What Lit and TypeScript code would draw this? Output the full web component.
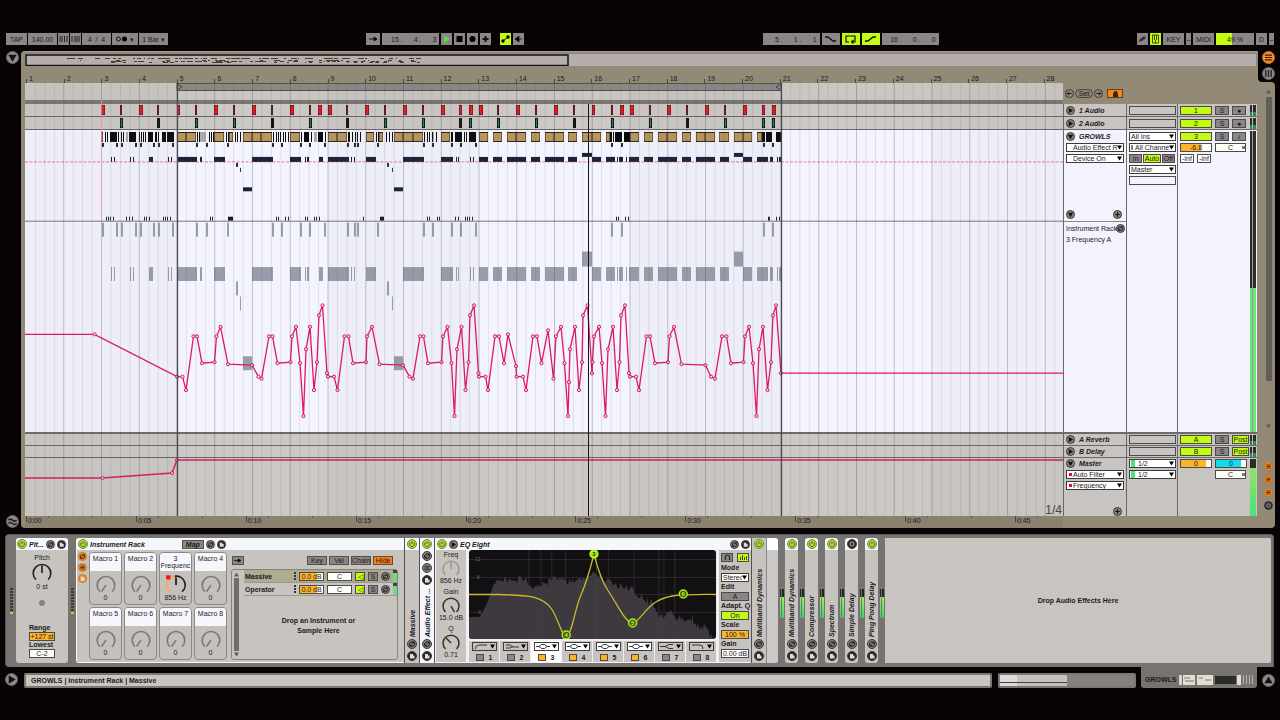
import { LitElement, html, svg, css, nothing } from "lit";
import { customElement } from "lit/decorators.js";

type Span = [number, number];

/* ---- arrangement data, in canvas units (one bar = 37.75) ---- */
const BAR = 37.75;
const redClips: Span[] = [
  [101, 4], [120, 2], [139, 4], [157, 2], [177, 3], [195, 2], [214, 4], [233, 2], [252, 4], [271, 2], [290, 4], [309, 2],
  [318, 4], [328, 4], [346, 2], [365, 4], [384, 2], [403, 4], [422, 2], [441, 4], [459, 3], [469, 4], [479, 4], [497, 2],
  [516, 4], [535, 2], [554, 4], [573, 2], [592, 3], [611, 2], [620, 4], [630, 4], [649, 2], [667, 4], [686, 2], [705, 4],
  [724, 2], [743, 4], [762, 3], [772, 4],
];
const greenClips: [number, boolean][] = [
  [120, true], [157, false], [195, true], [233, true], [271, false], [309, true], [346, false], [384, true], [422, true],
  [459, false], [469, true], [497, true], [535, true], [573, false], [611, true], [649, true], [686, false], [724, true],
  [762, true], [772, true],
];
const tanClips: Span[] = [
  [101, 2], [177, 9], [186, 10], [214, 10], [229, 4], [243, 9], [252, 9], [261, 11], [290, 10], [328, 9], [337, 10],
  [366, 8], [379, 4], [394, 9], [403, 10], [413, 10], [441, 9], [479, 9], [493, 9], [507, 9], [516, 10], [531, 9],
  [545, 9], [554, 10], [568, 9], [582, 10], [592, 9], [606, 4], [630, 9], [644, 9], [658, 9], [667, 10], [682, 9],
  [696, 9], [705, 10], [719, 10], [734, 9], [743, 9], [757, 5],
];
const blackClips: Span[] = [
  [105, 1], [107, 1], [110, 7], [118, 1], [121, 1], [123, 1], [129, 7], [139, 1], [141, 1], [143, 1], [145, 1], [148, 5], [155, 2],
  [158, 1], [162, 4], [167, 7], [197, 1], [199, 1], [209, 1], [211, 1], [213, 1], [226, 1], [228, 1], [235, 1], [237, 1],
  [240, 1], [273, 1], [276, 1], [278, 1], [280, 1], [283, 1], [285, 1], [288, 1], [301, 1], [304, 5], [311, 1], [318, 5],
  [325, 1], [348, 2], [352, 1], [355, 1], [357, 1], [360, 1], [376, 1], [378, 1], [386, 1], [389, 1], [392, 1], [424, 1], [427, 1],
  [429, 1], [432, 1], [436, 1], [451, 2], [455, 7], [464, 1], [466, 1], [469, 7], [610, 2], [613, 1], [615, 7], [624, 6],
  [762, 3], [766, 6], [776, 5],
];
const grayClips: Span[] = [[126, 2], [200, 6], [314, 3], [432, 2]];
const topTicks = [
  102, 116, 121, 135, 140, 153, 158, 172, 196, 206, 227, 272, 281, 300, 309, 324, 347, 354, 357, 377, 423, 432, 451, 460,
  475, 611, 621, 763, 772,
];
const notes: Span[] = [
  [111, 1], [114, 1], [130, 1], [133, 1], [149, 4], [168, 1], [171, 1], [177, 20], [200, 2], [214, 11], [252, 21],
  [290, 11], [305, 1], [307, 2], [319, 4], [328, 21], [351, 1], [354, 1], [366, 10], [403, 21], [441, 12], [456, 1],
  [458, 1], [470, 1], [473, 1], [479, 9], [493, 9], [507, 19], [531, 9], [545, 19], [568, 9], [592, 9], [606, 9],
  [617, 1], [619, 4], [626, 1], [629, 10], [644, 9], [658, 19], [682, 9], [696, 19], [720, 9], [743, 9], [757, 11],
  [770, 3], [777, 1], [779, 2],
];
const lowTicks = [
  106, 108, 110, 113, 126, 129, 132, 144, 146, 149, 163, 165, 167, 170, 210, 212, 276, 278, 285, 288, 305, 307, 314, 316,
  319, 363, 427, 429, 437, 439, 455, 458, 465, 467, 469, 472, 616, 618, 625, 628, 768, 769, 776, 779,
];
const growlPoints: Span[] = [
  [94.5, 334], [177, 376.5], [182.5, 376.5], [186, 390], [193.5, 336], [197, 336], [202, 363], [214.5, 362], [216.5, 336],
  [220.5, 326.5], [228, 364], [252, 365], [258.5, 376.5], [261.5, 378.5], [269, 336], [272.5, 336], [277.5, 363],
  [290.5, 362], [292, 336], [296, 326.5], [300, 363], [303.5, 416], [306, 349], [310, 326.5], [314, 390], [317, 362],
  [319, 315], [322.5, 305], [327, 373], [328, 376.5], [334, 376.5], [337.5, 390], [344.5, 336], [348.5, 336], [353, 363],
  [366, 362], [367, 336], [372, 326.5], [379.5, 364], [403, 365], [409.5, 376.5], [413, 378.5], [420, 336], [423.5, 336],
  [428, 363], [441.5, 362], [443, 336], [447.5, 326.5], [451.5, 363], [454.5, 416], [457, 349], [461.5, 326.5],
  [465.5, 390], [468.5, 362], [470, 315], [474, 305], [478.5, 373], [479, 376.5], [485.5, 376.5], [488, 390], [495, 336],
  [499, 336], [504, 363], [508, 334], [516, 366], [516.5, 376.5], [523, 376.5], [526, 390], [533, 336], [537, 336],
  [541.5, 363], [548, 330], [553.5, 378.5], [556, 336], [561, 326.5], [564.5, 363], [568, 416], [569, 382], [570, 349],
  [575, 326.5], [579, 390], [582, 362], [583, 315], [587.5, 305], [592, 373], [592.5, 362], [594, 336], [599, 326.5],
  [602, 363], [605.5, 416], [608, 349], [613, 326.5], [617, 390], [619.5, 362], [621, 315], [625, 305], [629, 373],
  [630, 376.5], [636, 376.5], [639, 390], [646.5, 336], [650, 336], [655, 363], [668, 362], [669.5, 336], [674, 326.5],
  [681.5, 364], [705.5, 365], [711, 376.5], [715, 378.5], [722, 336], [726.5, 336], [731, 363], [743.5, 362], [745, 336],
  [749, 326.5], [753, 363], [756.5, 416], [759, 349], [763, 326.5], [767.5, 390], [771, 362], [773, 315], [776, 305],
  [781, 373],
];
const hash = (n: number) => {
  const v = Math.sin(n * 127.1) * 43758.5453;
  return v - Math.floor(v);
};

/* ---- small glyphs ---- */
const rects = (list: Span[], y: number, h: number, fill: string) =>
  list.map(([x, w]) => svg`<rect x=${x} y=${y} width=${w} height=${h} fill=${fill}/>`);

const glyphs: Record<string, unknown> = {
  down: svg`<path d="M2.500 3.500h6L5.500 8.500z" fill="#111"/>`,
  right: svg`<path d="M3.500 2.500v6L8.500 5.500z" fill="#111"/>`,
  up: svg`<path d="M2.500 7.500h6L5.500 2.500z" fill="#111"/>`,
  plus: svg`<path d="M5.500 3v5M3 5.500h5" stroke="#111" stroke-width="1.200"/>`,
  left: svg`<path d="M8 5.500H3M5 3.500L3 5.500l2 2" fill="none" stroke="#111"/>`,
  fwd: svg`<path d="M3 5.500h5M6 3.500l2 2-2 2" fill="none" stroke="#111"/>`,
  swap: svg`<path d="M3 6.500a2.500 2.500 0 0 1 4-2.500M8 4.500a2.500 2.500 0 0 1-4 2.800M7.500 2.500v2h-2M3.500 8.500v-2h2" fill="none" stroke="#1a1a1a" stroke-width="1"/>`,
  save: svg`<path d="M3.500 3.500h3v1.500h1.500v3h-4.500z" fill="#ddd"/>`,
  power: svg`<path d="M5.500 2.500v3M3.800 3.800a2.500 2.500 0 1 0 3.400 0" fill="none" stroke="#4c6a10" stroke-width=".9"/>`,
  off: svg`<circle cx="5.500" cy="5.500" r="2" fill="none" stroke="#bbb" stroke-width=".9"/>`,
  list: svg`<path d="M3 3.800h5M3 5.500h5M3 7.200h5" stroke="#222" stroke-width=".9"/>`,
  bars: svg`<path d="M3.500 3v5M5.500 3v5M7.500 3v5" stroke="#222"/>`,
  wave: svg`<path d="M2.500 4.500q1.500-1.500 3 0t3 0M2.500 7q1.500-1.500 3 0t3 0" fill="none" stroke="#222" stroke-width="1.100"/>`,
};
const round = (glyph: string, label: string, cls = "") => html`
  <button class="round ${cls}" aria-label=${label}><svg viewBox="1.500 1.500 8 8">${glyphs[glyph]}</svg></button>`;

const drop = (label: string, value: string, cls = "") => html`
  <span class="drop ${cls}">
    <select aria-label=${label}><option>${value}</option></select>
    <svg class="caret" viewBox="0 0 6 5"><path d="M0 0h6L3 5z"/></svg>
  </span>`;

const knob = (angle: number, color = "#7c7975") => html`
  <svg class="knob" viewBox="0 0 20 18">
    <path d="M4.500 16A8 8 0 1 1 15.500 16" fill="none" stroke=${color} stroke-width="1.500"/>
    <path d="M10 10v-7" stroke=${color} stroke-width="1.500" transform="rotate(${angle} 10 10)"/>
  </svg>`;

@customElement("app-root")
export class AppRoot extends LitElement {
  static styles = css`
    :host {
      display: flex; flex-direction: column; min-height: 100vh; box-sizing: border-box;
      padding: 33px 0 32px; background: #080406; color: #1c1a1a;
      font: 7px/9px "Liberation Sans", Arial, sans-serif; overflow: hidden;
    }
    *, *::before, *::after { box-sizing: border-box; }
    svg { display: block; }
    button, select, input { font: inherit; color: inherit; margin: 0; padding: 0; border: 0; border-radius: 0; }
    .row { display: flex; align-items: center; }

    /* control bar */
    .bar { display: flex; height: 12px; padding: 0 6px; margin-bottom: 6px; }
    .group { display: flex; gap: 2px; }
    .group.tight { gap: 1px; }
    .s5 { flex: 5; } .s6 { flex: 6; }
    .cb { height: 12px; background: #8c8585; display: flex; align-items: center; justify-content: center; text-align: center; white-space: nowrap; overflow: hidden; }
    .cb.lime, .lime { background: #c3fb12; }
    .w5 { width: 5px; } .w11 { width: 11px; } .w14 { width: 14px; } .w18 { width: 18px; } .w21 { width: 21px; }
    .w26 { width: 26px; } .w29 { width: 29px; } .w57 { width: 57px; }
    .cb svg { width: 11px; height: 10px; }
    .cpu { width: 38px; background: linear-gradient(90deg, #c3fb12 42%, #8c8585 42%); }
    .digits { gap: 11px; justify-content: flex-end; padding-right: 3px; }

    .round { width: 9px; height: 9px; flex: none; border-radius: 50%; background: #85817d; border: 1px solid #3c3a39; display: flex; }
    .round svg { width: 100%; height: 100%; }
    .round.big { width: 13px; height: 13px; background: #8d8987; border-color: #6c6867; }
    .round.on { width: 10px; height: 10px; background: #b4d94a; border-color: #6f8a2a; }
    .round.dark { background: #2c2a2b; }
    .round.orange { background: #fb8c1c; border-color: #c87524; }
    .round.clear { background: transparent; }

    /* arrangement */
    .arrange { display: flex; flex: 1; }
    .gutter { width: 21px; display: flex; flex-direction: column; justify-content: space-between; align-items: center; padding: 0 0 0 3px; }
    .main { flex: 1; min-width: 0; display: flex; flex-direction: column; background: #928976; border-radius: 4px 0 0 4px; border-top: 1px solid #a69f8f; padding: 2px 1px 0 4px; }
    .overview { height: 12px; margin-right: 1px; background: #b5aead; }
    .overview svg, .lane svg, .grid { width: 100%; height: 100%; }
    .ruler { display: flex; height: 17px; margin-right: 194px; padding: 8px 0 0 1px; }
    .ruler span { flex: 100 1 0; min-width: 0; padding-left: 3px; white-space: nowrap; background: linear-gradient(#4b463e, #4b463e) 0 5px / 1px 4px no-repeat; }
    .ruler span:last-child { flex-grow: 47; }
    .times { display: flex; height: 12px; margin-right: 194px; padding-left: 1px; background: #8a816f; }
    .times span { flex: 110 1 0; min-width: 0; padding-left: 2px; background: linear-gradient(#4b463e, #4b463e) 0 0 / 1px 6px no-repeat, linear-gradient(#5f594f, #5f594f) 22px 0 / 1px 2px no-repeat, linear-gradient(#5f594f, #5f594f) 66px 0 / 1px 2px no-repeat; }
    .times span:last-child { flex-grow: 47; overflow: visible; }
    .work { flex: 1; display: grid; grid-template-columns: minmax(0, 1fr) 194px; }
    .lanes { position: relative; display: flex; flex-direction: column; }
    .grid { position: absolute; inset: 0; pointer-events: none; }
    .scrub { height: 17px; background: #cac7c2; }
    .scrub svg { width: 100%; height: 100%; }
    .sep { height: 4px; background: #7a7672; }
    .lane { height: 13px; background: #cbc8c5; border-bottom: 1px solid #6b6766; }
    .lane.tall { flex: 1 1 0; background: #f4f4fe; border-bottom: 2px solid #6e6a67; position: relative; }
    .lane.tall svg { position: absolute; inset: 0; }
    .lane.send { height: 12px; }
    .lane.master { height: 58px; border: 0; position: relative; }
    .zoomlabel { position: absolute; right: 1px; bottom: 0; font-size: 12px; line-height: 12px; color: #444; }

    .heads { display: flex; flex-direction: column; }
    .setrow { height: 21px; padding-left: 2px; gap: 1px; }
    .set { width: 18px; height: 9px; border: 1px solid #4b463e; border-radius: 5px; background: #8b8373; line-height: 7px; }
    .lock { width: 16px; height: 9px; background: #fd8410; border: 1px solid #59402a; margin-left: 3px; display: grid; place-items: center; }
    .lock svg { width: 5px; height: 6px; }
    .head { display: grid; grid-template-columns: 63px 51px 80px; height: 13px; background: #c8c4c1; border-bottom: 1px solid #6b6766; }
    .head.tall { flex: 1 1 0; background: #f3f3fe; border-bottom: 2px solid #6e6a67; }
    .head.send { height: 12px; }
    .head.master { height: 58px; border: 0; }
    .col { border-left: 1px solid #6b6766; padding: 2px 2px 0; position: relative; display: flex; flex-direction: column; gap: 2px; min-width: 0; }
    .send .col, .master .col { padding-top: 1px; }
    .name { display: flex; align-items: center; gap: 4px; height: 9px; }
    .name span { font-weight: bold; font-style: italic; }
    .mix { display: flex; gap: 3px; height: 9px; }
    .box { height: 9px; border: 1px solid #4c4a4a; display: block; width: 47px; background: transparent; flex: none; }
    .num { width: 32px; height: 9px; border: 1px solid #4c4a4a; line-height: 7px; text-align: center; flex: none; }
    .sq { width: 14px; height: 9px; border: 1px solid #4c4a4a; background: #8c8585; line-height: 7px; text-align: center; flex: none; }
    .sq.lime { background: #c3fb12; }
    .pan { width: 31px; height: 9px; border: 1px solid #4c4a4a; background: linear-gradient(90deg, #777, #777) 26px 2px / 3px 3px no-repeat #fdfdf8; line-height: 7px; text-align: center; }
    .blank { width: 32px; height: 9px; }
    .inf { width: 14px; height: 9px; border: 1px solid #4c4a4a; background: #fff; line-height: 7px; text-align: center; }
    .post { width: 17px; }
    .vol { background: linear-gradient(90deg, #fdb42c 68%, #fdfdf8 68%); }
    .vol.full { background: linear-gradient(90deg, #fdb42c 84%, #fdfdf8 84%); }
    .cyan { background: linear-gradient(90deg, #12dbee 84%, #fdfdf8 84%); }
    .meter { position: absolute; right: 1px; top: 1px; bottom: 0; width: 6px; background: linear-gradient(90deg, transparent 2px, #bbb 2px 3px, transparent 3px), linear-gradient(#2c2c2c 60%, #2c8a52 60%); }
    .meter.hot { background: linear-gradient(90deg, transparent 2px, #9a9a9a 2px 3px, transparent 3px), linear-gradient(#2c2c2c 52%, #69e47a 52%); }
    .meter.mast { background: linear-gradient(#2c2c2c 15%, #8ce65e 16%, #4fe37c 90%); }
    .drop { position: relative; display: block; height: 9px; width: 58px; border: 1px solid #3c3a3a; background: #fff; flex: none; }
    .drop select { display: block; appearance: none; background: transparent; width: 100%; height: 7px; line-height: 7px; padding: 0 6px; overflow: hidden; }
    .drop .caret { position: absolute; right: 1px; top: 1px; width: 5px; height: 5px; pointer-events: none; }
    .drop.io { width: 47px; } .drop.io select { padding-left: 1px; }
    .drop.chan select { padding-left: 5px; }
    .drop.chan::before { content: ""; position: absolute; left: 1px; top: 1px; width: 2px; height: 5px; background: #8a8585; }
    .drop.sig::before { content: ""; position: absolute; left: 1px; top: 0; width: 4px; height: 7px; background: #53e17a; }
    .drop.sig select { padding-left: 8px; }
    .drop.red::before { content: ""; position: absolute; left: 2px; top: 2px; width: 3px; height: 3px; background: #d11148; }
    .three { display: flex; gap: 1px; } .three button { height: 9px; border: 1px solid #4c4a4a; background: #8c8585; line-height: 7px; width: 14px; } .three button:nth-child(2) { width: 18px; background: #c3fb12; }
    .spring { flex: 1; }
    .upper { height: 90px; display: flex; flex-direction: column; gap: 2px; }
    .between { display: flex; justify-content: space-between; align-items: center; padding: 0 2px 0 0; }
    .rule { height: 1px; background: #8a8787; margin: 0 -2px; }
    .chainname { display: flex; white-space: nowrap; height: 9px; }
    .chainname .round { margin-left: -1px; }

    .side { width: 22px; display: flex; flex-direction: column; padding-right: 5px; }
    .notch { height: 31px; display: flex; flex-direction: column; align-items: center; gap: 3px; padding-left: 4px; background: #080406; border-radius: 0 0 0 4px; }
    .wrap { background: #928976; margin-left: -1px; padding-left: 1px; }
    .scroll { flex: 1; background: #928976; border-radius: 0 4px 4px 0; display: flex; flex-direction: column; align-items: center; gap: 3px; padding: 7px 0 18px 4px; }
    .tri { width: 5px; height: 5px; fill: #605b52; }
    .thumb { flex: 1; width: 6px; background: #605d5a; margin-bottom: 40px; border-radius: 1px; }
    .dots { display: flex; flex-direction: column; gap: 4px; margin-top: 30px; }

    /* device view */
    .devices { display: flex; height: 133px; margin: 6px 6px 0 5px; background: #777370; border: solid #5a5756; border-width: 1px 1px 0; border-radius: 4px 4px 0 4px; padding: 3px 2px 4px 0; }
    .dev { display: flex; flex-direction: column; background: #c7c4c0; border-radius: 3px; overflow: hidden; flex: none; }
    .title { height: 12px; background: #f6f6fd; display: flex; align-items: center; gap: 2px; padding: 0 1px; font-weight: bold; font-style: italic; white-space: nowrap; flex: none; }
    .title .fix { width: 33px; }
    .gap { width: 8px; flex: none; display: flex; justify-content: center; align-items: center; }
    .gap.wide { width: 10px; }
    .gap i { width: 3px; height: 26px; background: repeating-linear-gradient(#3d3b38 0 2px, #777370 2px 3px); border-bottom: 2px solid #d0c83a; }
    .gap.hot { width: 7px; } .gap.hot i { width: 4px; height: 29px; border: 0; background: linear-gradient(90deg, transparent 1px, #777370 1px 2px, transparent 2px), linear-gradient(#222 8px, #9bf06a 8px, #3fd06a); margin-top: 5px; }
    .pitch { width: 52px; }
    .pbody { display: flex; flex-direction: column; align-items: center; padding-top: 3px; flex: 1; }
    .knob { width: 22px; height: 20px; flex: none; }
    .led { width: 6px; height: 6px; border-radius: 50%; background: #85817d; margin: 9px 0 18px; }
    .field { width: 26px; height: 9px; border: 1px solid #4c4a4a; text-align: center; background: #fff; line-height: 7px; display: block; white-space: nowrap; flex: none; }
    .field.amber { background: #fdb42c; }
    .lab { width: 26px; font-weight: bold; height: 8px; line-height: 8px; }

    .rack { display: flex; background: #c7c4c0; border-radius: 3px; overflow: hidden; flex: none; }
    .rackmain { width: 328px; display: flex; flex-direction: column; border-bottom: 1px solid #f6f6fd; border-left: 1px solid #f6f6fd; }
    .map { width: 22px; height: 9px; border: 1px solid #55504e; background: #8c8585; line-height: 7px; }
    .rbody { display: flex; flex: 1; padding: 2px 6px 3px 0; }
    .tools { width: 12px; display: flex; flex-direction: column; gap: 2px; padding: 0 1px; }
    .macros { display: grid; grid-template-columns: repeat(4, 33px); grid-template-rows: 53px 53px; gap: 2px; }
    .macro { border: 1px solid #8b8886; border-radius: 4px; overflow: hidden; text-align: center; line-height: 7px; display: flex; flex-direction: column; align-items: center; background: #c4c1bd; }
    .macro span { background: #f6f6fd; display: block; width: 100%; height: 18px; padding-top: 2px; white-space: nowrap; flex: none; }
    .macro .knob { margin: 3px 0 0; }
    .chains { flex: 1; margin-left: 4px; display: flex; flex-direction: column; }
    .ctop { display: flex; gap: 2px; height: 9px; margin: 4px 5px 4px 1px; }
    .tb { width: 20px; height: 9px; border: 1px solid #55504e; background: #8c8585; line-height: 7px; }
    .tb.hide { background: #fd7c10; } .tb.small { width: 12px; display: grid; place-items: center; }
    .list { flex: 1; border: 1px solid #85817d; border-radius: 3px; display: flex; }
    .lscroll { width: 12px; display: flex; flex-direction: column; align-items: center; gap: 1px; padding: 2px 3px 2px 0; }
    .lscroll i { flex: 1; width: 5px; background: #716d6a; }
    .crows { flex: 1; display: flex; flex-direction: column; }
    .crow { display: flex; align-items: center; gap: 3px; height: 13px; border-bottom: 1px solid #9a9794; padding-left: 1px; }
    .crow.sel { background: #adab90; }
    .crow b { flex: 1; }
    .crow .field { width: 25px; }
    .crow .amber { background: linear-gradient(90deg, #fdb42c 75%, #fff 75%); }
    .crow .sq { width: 10px; }
    .pip { width: 2px; height: 9px; background: repeating-linear-gradient(#333 0 2px, transparent 2px 3px); }
    .lvl { width: 4px; height: 12px; background: linear-gradient(#444 3px, #6ddc84 3px); }
    .dropzone { flex: 1; display: grid; place-content: center; text-align: center; font-weight: bold; line-height: 10px; padding: 0 4px 4px 0; }

    .strip { width: 13px; flex: none; display: flex; flex-direction: column; align-items: center; gap: 2px; background: #c7c4c0; padding: 1px 0 2px; border-radius: 3px; }
    .strip.cap { background: linear-gradient(#f6f6fd 12px, #c7c4c0 12px); }
    .strip.in { border-radius: 0; border-left: 1px solid #55504e; width: 15px; }
    .strip.white { background: #f6f6fd; }
    .strip .vt { flex: 1; writing-mode: vertical-rl; transform: rotate(180deg); font-weight: bold; font-style: italic; text-align: left; white-space: nowrap; line-height: 9px; }
    .strip .round { height: 10px; width: 10px; }
    .end { width: 12px; background: linear-gradient(#fff 12px, #cbc9c8 12px); border-left: 1px solid #8b8886; }

    .eq { width: 317px; display: flex; flex-direction: column; border-left: 1px solid #55504e; background: #f0f0f4; padding-left: 1px; }
    .ebody { display: flex; flex: 1; gap: 3px; background: #f0f0f4; padding-bottom: 1px; }
    .eknobs { width: 30px; background: #c7c4c0; display: flex; flex-direction: column; align-items: center; line-height: 8px; padding-top: 1px; }
    .eknobs .knob { height: 18px; }
    .eknobs span:nth-child(3n) { margin-bottom: 3px; }
    .emid { flex: 1; display: flex; flex-direction: column; gap: 2px; min-width: 0; }
    .screen { width: 100%; height: 89px; border-radius: 3px; background: #121013; }
    .bands { display: grid; grid-template-columns: repeat(8, 1fr); gap: 1px; flex: 1; }
    .band { background: #c7c4c0; display: flex; flex-direction: column; align-items: center; gap: 2px; padding-top: 1px; }
    .band.cur { background: #fff; }
    .band .drop { width: 25px; background: transparent; } .band.act .drop { background: #fff; }
    .band .shape { position: absolute; left: 1px; top: 0; width: 14px; height: 7px; }
    .band label { display: flex; align-items: center; gap: 5px; font-weight: bold; }
    .band input { appearance: none; width: 8px; height: 7px; border: 1px solid #4c4a4a; background: #8c8585; }
    .band input:checked { background: #fdb41c; }
    .eright { width: 32px; background: #c7c4c0; padding: 3px 2px 0; display: flex; flex-direction: column; line-height: 8px; font-weight: bold; }
    .eright .row { justify-content: space-between; margin-bottom: 2px; }
    .eright .sq { width: 12px; display: grid; place-items: center; }
    .eright .drop, .eright .field { width: 28px; font-weight: normal; margin: 1px 0; }
    .eright .gray { background: #8c8585; } .eright .field.lime { background: #c3fb12; }
    .eright span.l { height: 8px; white-space: nowrap; }
    .empty { flex: 1; display: grid; place-items: center; background: #c8c5c1; font-weight: bold; border-radius: 0 2px 2px 0; }

    /* status */
    .status { display: flex; height: 21px; padding: 0 5px; }
    .tabicon { width: 19px; padding: 6px 0 0 0; flex: none; }
    .msg { flex: 1; margin: 6px 6px 0 0; height: 15px; background: #c9c6c2; border: 2px solid #7b7775; border-radius: 2px; font-weight: bold; padding: 1px 5px; }
    .mini { width: 138px; margin: 6px 5px 0 0; height: 15px; background: linear-gradient(#444, #444) 0 7px / 67px 1px no-repeat, linear-gradient(90deg, #dedbda 17px, #c5c2bf 17px 67px, #85817f 67px); border: 2px solid #7b7775; border-radius: 2px; }
    .tab { width: 116px; background: #777370; border-radius: 0 0 3px 3px; display: flex; align-items: center; gap: 2px; padding: 4px 3px 0 4px; font-weight: bold; }
    .tab svg { width: 76px; height: 10px; flex: none; }
    .last { padding: 7px 0 0 5px; }
  `;

  private bar() {
    const digits = (a: string, b: string, c: string) => html`<span class="cb w57 digits"><span>${a}</span><span>${b}</span><span>${c}</span></span>`;
    return html`<header class="bar">
      <div class="group tight">
        <button class="cb w21">TAP</button><span class="cb w29">140.00</span>
        <button class="cb w11" aria-label="Nudge down"><svg viewBox="0 0 11 10"><path d="M2 2v6M4 2v6M6.500 2v6M9 2v6" stroke="#222"/></svg></button>
        <button class="cb w11" aria-label="Nudge up"><svg viewBox="0 0 11 10"><path d="M2 2v6M5 2v6M7 2v6M9 2v6" stroke="#222"/></svg></button>
        <span class="cb w29">4&nbsp; / &nbsp;4</span>
        <button class="cb w26" aria-label="Metronome"><svg viewBox="0 0 11 10"><circle cx="2.500" cy="5" r="2" fill="none" stroke="#111"/><circle cx="8.500" cy="5" r="2.500"/></svg>&nbsp; ▾</button>
        <button class="cb w29">1 Bar ▾</button>
      </div>
      <i class="s5"></i>
      <div class="group">
        <button class="cb w14" aria-label="Follow"><svg viewBox="0 0 11 10"><path d="M1 5h7M6 3l3 2-3 2z" stroke="#111"/></svg></button>
        ${digits("15 .", "4 .", "3")}
        <button class="cb w11" aria-label="Play"><svg viewBox="0 0 11 10"><path d="M3 1.500v7L9 5z" fill="#4ee63c"/></svg></button>
        <button class="cb w11" aria-label="Stop"><svg viewBox="0 0 11 10"><path d="M2.500 2h6v6h-6z"/></svg></button>
        <button class="cb w11" aria-label="Record"><svg viewBox="0 0 11 10"><circle cx="5.500" cy="5" r="3"/></svg></button>
        <button class="cb w11" aria-label="Overdub"><svg viewBox="0 0 11 10"><path d="M5.500 2v6M2.500 5h6" stroke="#111" stroke-width="2"/></svg></button>
        <i class="w5"></i>
        <button class="cb w11 lime" aria-label="Automation arm"><svg viewBox="0 0 11 10"><path d="M3 7l5-4" stroke="#111"/><circle cx="3" cy="7" r="1.700"/><circle cx="8" cy="3" r="1.700"/></svg></button>
        <button class="cb w11" aria-label="Back to arrangement"><svg viewBox="0 0 11 10"><path d="M2 5l4-3v6zM6 5h3" stroke="#111" stroke-width=".8"/></svg></button>
      </div>
      <i class="s6"></i>
      <div class="group">
        ${digits("5 .", "1 .", "1")}
        <button class="cb w18" aria-label="Punch in"><svg viewBox="0 0 11 10"><path d="M0 3h3l5 4h3" fill="none" stroke="#111" stroke-width="1.300"/></svg></button>
        <button class="cb w18 lime" aria-label="Loop"><svg viewBox="0 0 11 10"><path d="M4 8H1V2h9v6H7M8.500 6L6.500 8l2 1.500" fill="none" stroke="#111" stroke-width="1.200"/></svg></button>
        <button class="cb w18 lime" aria-label="Punch out"><svg viewBox="0 0 11 10"><path d="M0 7h3l5-4h3" fill="none" stroke="#111" stroke-width="1.300"/></svg></button>
        ${digits("16 .", "0 .", "0")}
      </div>
      <i class="s5"></i>
      <div class="group">
        <button class="cb w11" aria-label="Draw"><svg viewBox="0 0 11 10"><path d="M2 8l1-3 4-3 2 2-4 3z" fill="#333"/></svg></button>
        <button class="cb w11 lime" aria-label="Keyboard"><svg viewBox="0 0 11 10"><path d="M2.500 1v8h6V1zM4.500 1v5M6.500 1v5M5.500 6v3" fill="none" stroke="#3b4d08"/></svg></button>
        <button class="cb w21">KEY</button><span class="cb w5">–</span><button class="cb w21">MIDI</button>
        <span class="cb cpu">49 %</span><span class="cb w11">D</span><span class="cb w5">–</span>
      </div>
    </header>`;
  }

  private grid() {
    const lines = [];
    for (let i = 1; i < 110; i++) {
      const x = 26 + (i * BAR) / 4;
      const major = i % 4 === 0;
      lines.push(svg`<rect x=${x - 0.5} y="83" width="1" height="433" fill="#3a3a50" opacity=${major ? 0.28 : i % 4 === 2 ? 0.13 : 0.1}/>`);
    }
    return html`<svg class="grid" viewBox="25 83 1038 433" preserveAspectRatio="none">
      <path d="M25 83h152v433H25zM328 83h151v433H328zM630 83h151v433H630zM932 83h131v433H932z" fill="#6a6a80" opacity=".045"/>
      ${lines}
      <path d="M101.500 100v121" stroke="#ff9a9a" stroke-width="1" opacity=".7"/>
      <path d="M177.500 83v433M781.500 83v433" stroke="#4d4b50" stroke-width="1.300"/>
      <path d="M588.500 104v412" stroke="#17141a" stroke-width="1"/>
    </svg>`;
  }

  private growls() {
    const pts = growlPoints.map((p) => p.join(",")).join(" ");
    const gray = "#999dab";
    return html`<svg viewBox="25 129 1038 303" preserveAspectRatio="none">
      <path d="M25 161h1038" stroke="#f08db0" stroke-width="1.300" stroke-dasharray="3 1.500"/>
      ${rects(grayClips, 131, 10, "#aaa")}${rects(tanClips, 131, 10, "#2a2118")}
      ${tanClips.map(([x, w]) => svg`<rect x=${x + 0.5} y="132" width=${w - 1} height="8" fill="#b9965c"/>`)}
      ${rects(blackClips, 131, 10, "#0b0a0c")}
      ${rects(topTicks.map((x): Span => [x, 2]), 142, 4, "#24283a")}
      ${rects(notes, 156, 5, "#1a2338")}${rects([[582, 10], [734, 9]], 152, 4, "#1a2338")}
      ${rects([[236, 2], [387, 2]], 162, 4, "#2a3044")}${rects([[240, 1], [392, 1]], 167, 4, "#2a3044")}
      ${rects([[243, 9], [394, 9]], 186.5, 4, "#1a2338")}
      ${rects(lowTicks.map((x): Span => [x, 1]), 216, 4, "#24283a")}${rects([[228, 5], [380, 4]], 216, 4, "#1a1a2c")}
      <path d="M25 220.500h1038" stroke="#77757c"/>
      ${rects(topTicks.map((x): Span => [x, 2]), 222, 14, gray)}
      ${rects(notes, 266.5, 14, gray)}${rects([[582, 10], [734, 9]], 251, 15, gray)}
      ${rects([[236, 2], [387, 2]], 281, 14, gray)}${rects([[240, 1], [392, 1]], 296, 14, gray)}
      ${rects([[243, 9], [394, 9]], 356, 14, gray)}
      <polyline points="25,334 ${pts} 1063,373" fill="none" stroke="#e0195f" stroke-width="1.300"/>
      ${growlPoints.map(([x, y]) => svg`<circle cx=${x} cy=${y} r="1.600" fill="#f6dbe6" stroke="#d6185b" stroke-width="1"/>`)}
    </svg>`;
  }

  private arrangement() {
    const marks = [];
    for (let i = 0; i < 230; i++) {
      const x = 40 + hash(i + 3) * 356;
      if (x < 78 && hash(i) > 0.35) continue;
      const low = hash(i + 900) > 0.5;
      marks.push(svg`<rect x=${Math.round(x)} y=${low ? 6 + Math.round(hash(i + 20) * 2) : 4} width=${1 + Math.round(hash(i + 50) * 4)} height="1" fill="#4a3c30"/>`);
    }
    const io = (n: string) => html`<div class="col"><input class="box" aria-label=${n} readonly></div>`;
    return html`<section class="arrange">
      <div class="gutter">${round("down", "Show browser", "big")}${round("wave", "Preview", "big")}</div>
      <div class="main">
        <div class="overview"><svg viewBox="0 0 1231 12" preserveAspectRatio="none">${marks}
          <rect x="1" y="1" width="542" height="10.500" fill="none" stroke="#111" stroke-width="1.500"/></svg></div>
        <div class="ruler">${Array.from({ length: 28 }, (_, i) => html`<span>${i + 1}</span>`)}</div>
        <div class="work">
          <div class="lanes">
            <div class="scrub"><svg viewBox="25 83 1038 17" preserveAspectRatio="none">
              <rect x="177" y="83.500" width="604" height="7" fill="#8d8784" stroke="#55504e"/>
              <path d="M178 84.500l4 2.500-4 2.500M780 84.500l-4 2.500 4 2.500" fill="none" stroke="#444"/></svg></div>
            <div class="sep"></div>
            <div class="lane"><svg viewBox="25 104 1038 12" preserveAspectRatio="none">
              ${rects(redClips, 105, 10, "#3b1216")}
              ${redClips.map(([x, w]) => svg`<rect x=${x + 0.5} y="105.500" width=${w - 1} height="9" fill=${w > 2 ? "#e81a26" : "#8a2230"}/>`)}</svg></div>
            <div class="lane"><svg viewBox="25 117 1038 12" preserveAspectRatio="none">
              ${greenClips.map(([x, g]) => svg`<rect x=${x} y="118" width="3" height="10" fill="#101413"/>${g ? svg`<rect x=${x + 1} y="119" width="1" height="8" fill="#1d8a68"/>` : nothing}`)}</svg></div>
            <div class="lane tall">${this.growls()}</div>
            <div class="lane send"></div><div class="lane send"></div>
            <div class="lane master"><svg viewBox="25 458 1038 58" preserveAspectRatio="none">
              <path d="M25 478h77.500l69.500-5 5-13h886" fill="none" stroke="#e0195f" stroke-width="1.500"/>
              <g fill="#f6dbe6" stroke="#d6185b"><circle cx="102.500" cy="478" r="1.500"/><circle cx="172" cy="473" r="1.500"/><circle cx="177" cy="460" r="1.500"/></g></svg>
              <span class="zoomlabel">1/4</span></div>
            ${this.grid()}
          </div>
          <div class="heads">
            <div class="setrow row">${round("left", "Previous locator", "clear")}<button class="set">Set</button>${round("fwd", "Next locator", "clear")}
              <button class="lock" aria-label="Lock envelopes"><svg viewBox="0 0 5 6"><path d="M0 2.500h5V6H0zM1 2.500V.5h3v2" fill="#3a2410" stroke="#3a2410" stroke-width=".5"/></svg></button></div>
            ${["1", "2"].map((n) => html`<div class="head">
              <div class="col"><div class="name">${round("right", "Unfold")}<span>${n} Audio</span></div></div>${io("Input " + n)}
              <div class="col"><div class="mix"><button class="num lime">${n}</button><button class="sq">S</button><button class="sq">●</button></div><i class="meter"></i></div></div>`)}
            <div class="head tall">
              <div class="col"><div class="upper"><div class="name">${round("down", "Fold")}<span>GROWLS</span></div>
                ${drop("Device", "Audio Effect R")}${drop("Control", "Device On")}<i class="spring"></i>
                <div class="between">${round("down", "Lanes")}${round("plus", "Add lane")}</div><div class="rule"></div></div>
                <div class="chainname"><span>Instrument Rack</span>${round("swap", "Remove lane")}</div><div>3 Frequency A</div></div>
              <div class="col">${drop("Input type", "All Ins", "io")}${drop("Input channel", "All Channe", "io chan")}
                <div class="three"><button>In</button><button>Auto</button><button>Off</button></div>
                ${drop("Output", "Master", "io")}<input class="box" aria-label="Output channel" readonly></div>
              <div class="col"><div class="mix"><button class="num lime">3</button><button class="sq">S</button><button class="sq">♪</button></div>
                <div class="mix"><span class="num vol">-6.8</span><span class="pan">C</span></div>
                <div class="mix"><span class="inf">-inf</span><span class="inf">-inf</span></div><i class="meter hot"></i></div></div>
            ${[["A", "A Reverb"], ["B", "B Delay"]].map(([n, t]) => html`<div class="head send">
              <div class="col"><div class="name">${round("right", "Unfold")}<span>${t}</span></div></div>${io("Send " + n)}
              <div class="col"><div class="mix"><button class="num lime">${n}</button><button class="sq">S</button><button class="sq post lime">Post</button></div><i class="meter"></i></div></div>`)}
            <div class="head master">
              <div class="col"><div class="name">${round("down", "Fold")}<span>Master</span></div>${drop("Device", "Auto Filter", "red")}${drop("Control", "Frequency", "red")}<i class="spring"></i>
                <div class="between"><span></span>${round("plus", "Add lane")}</div></div>
              <div class="col">${drop("Cue out", "1/2", "io sig")}${drop("Master out", "1/2", "io sig")}</div>
              <div class="col"><div class="mix"><span class="num vol full">0</span><span class="num cyan">0</span></div>
                <div class="mix"><i class="blank"></i><span class="pan">C</span></div><i class="meter mast"></i></div></div>
          </div>
        </div>
        <div class="times">${["0:00", "0:05", "0:10", "0:15", "0:20", "0:25", "0:30", "0:35", "0:40", "0:45"].map((t) => html`<span>${t}</span>`)}</div>
      </div>
      <div class="side">
        <div class="wrap"><div class="notch">${round("list", "Arrangement view", "big orange")}${round("bars", "Session view", "big")}</div></div>
        <div class="scroll"><svg class="tri" viewBox="0 0 6 5"><path d="M0 5h6L3 0z"/></svg><i class="thumb"></i>
          <svg class="tri" viewBox="0 0 6 5"><path d="M0 0h6L3 5z"/></svg>
          <div class="dots">${round("list", "In out", "orange")}${round("list", "Returns", "orange")}${round("list", "Mixer", "orange")}${round("off", "Delay", "dark")}</div></div>
      </div>
    </section>`;
  }

  private eqScreen() {
    let d = "M0 67 L11 67";
    const env = [[11, 67], [18, 54], [25, 34], [30, 24], [40, 30], [50, 26], [70, 35], [85, 27], [105, 30], [127, 22], [150, 32], [165, 38], [177, 47], [190, 54], [205, 60], [225, 65], [245, 76], [249, 84]];
    for (let i = 1; i < env.length; i++) {
      const [x0, y0] = env[i - 1], [x1, y1] = env[i];
      for (let x = x0; x < x1; x += 1.5) {
        const y = y0 + ((y1 - y0) * (x - x0)) / (x1 - x0) + (x > 26 ? hash(x) * 9 - 2 : 0) + (x > 185 ? hash(x * 3) * 9 : 0);
        d += ` L${x.toFixed(1)} ${y.toFixed(1)}`;
      }
    }
    const nodes: [number, number, string][] = [[98, 85, "4"], [126, 4, "3"], [165, 73, "5"], [216, 44, "6"]];
    return html`<svg class="screen" viewBox="0 0 249 89" preserveAspectRatio="none">
      <path d="M0 9.500h249M0 27.500h249M0 44.500h249M0 62.500h249M83.500 0v89M140.500 0v89M166.500 0v89M196.500 0v89" stroke="#2b272c"/>
      <path d="${d} L249 89 L0 89z" fill="#3d393e"/>
      <path d="M60.500 0v89M72.500 0v89M97.500 0v89M128.500 0v89M191.500 0v89M207.500 0v89" stroke="#4a464b" stroke-width=".5"/>
      <g font-size="5" fill="#6a666b"><text x="6" y="11">12</text><text x="8" y="29">6</text><text x="8" y="64">-6</text></g>
      <path d="M0 44.500H30C60 45 75 46 84 60C92 74 93 85 98 86C104 84 106 62 112 47C118 34 122 20 126 4C130 20 134 32 141 42C150 55 158 74 166 73C176 68 180 50 205 46C220 44 235 44.500 249 44.500" fill="none" stroke="#c9b92c" stroke-width="1.300"/>
      ${nodes.map(([x, y, n]) => svg`<circle cx=${x} cy=${y} r="4" fill=${n === "3" ? "#a6f01c" : "#4b5a10"} stroke="#a6ee1e" stroke-width="1.500"/><text x=${x} y=${y + 2} text-anchor="middle" font-size="6" font-weight="bold" fill=${n === "3" ? "#223300" : "#c6f53c"}>${n}</text>`)}
    </svg>`;
  }

  private strip(name: string, cls: string, off = false) {
    return html`<div class="strip ${cls}">${round(off ? "off" : "power", "Toggle " + name, off ? "dark" : "on")}<span class="vt">${name}</span>${round("swap", "Hot-swap")}${round("save", "Save preset", "dark")}</div>`;
  }

  private devices() {
    const bell = "M0 3.500h3l2.500-2h3l2.500 2h3M3 3.500l2.500 2h3l2.500-2";
    const shapes = ["M1 6q1-4 4-4h8", "M1 2h4l3 2h6M1 5h4l3-1.500", bell, bell, bell, bell, "M0 3.500h5l4-2h4M5 3.500l4 2h4", "M1 2h8q3 0 3 4"];
    const macros = ["Macro  1", "Macro  2", "3\nFrequenc", "Macro  4", "Macro  5", "Macro  6", "Macro  7", "Macro  8"];
    const chain = (n: string, cls = "") => html`<div class="crow ${cls}"><b>${n}</b><i class="pip"></i><span class="field amber">0.0 dB</span><span class="field">C</span>
      <button class="sq lime">◁</button><button class="sq">S</button>${round("swap", "Hot-swap")}<i class="lvl"></i></div>`;
    return html`<section class="devices">
      <div class="gap wide"><i></i></div>
      <div class="dev pitch"><div class="title">${round("power", "Toggle Pitch", "on")}<span>Pit...</span>${round("swap", "Hot-swap")}${round("save", "Save", "dark")}</div>
        <div class="pbody"><span>Pitch</span>${knob(0, "#222")}<span>0 st</span><i class="led"></i>
          <span class="lab">Range</span><span class="field amber">+127 st</span><span class="lab">Lowest</span><span class="field">C-2</span></div></div>
      <div class="gap"><i></i></div>
      <div class="rack">
        <div class="rackmain">
          <div class="title">${round("power", "Toggle rack", "on")}<span>Instrument Rack</span><i class="fix"></i><button class="map">Map</button>${round("swap", "Hot-swap")}${round("save", "Save", "dark")}</div>
          <div class="rbody">
            <div class="tools">${round("swap", "Macros", "orange")}${round("list", "Chains", "orange")}${round("save", "Devices", "orange")}</div>
            <div class="macros">${macros.map((m, i) => html`<div class="macro"><span>${m.split("\n").map((t, j) => (j ? html`<br>${t}` : t))}</span>
              ${i === 2 ? html`<svg class="knob" viewBox="0 0 20 18"><path d="M4.500 16A8 8 0 0 1 9 2" fill="none" stroke="#fba85c" stroke-width="1.600"/><path d="M9 2A8 8 0 0 1 15.500 16M10 10V3" fill="none" stroke="#222" stroke-width="1.600"/><path d="M1 1h4v4H1z" fill="#ee1c1c"/></svg>856 Hz` : html`${knob(215)}0`}</div>`)}</div>
            <div class="chains">
              <div class="ctop"><button class="tb small" aria-label="Auto select"><svg width="8" height="5" viewBox="0 0 8 5"><path d="M0 2.500h5M4 1l3 1.500L4 4z" stroke="#111" stroke-width=".8"/></svg></button><i class="spring"></i>
                <button class="tb">Key</button><button class="tb">Vel</button><button class="tb">Chain</button><button class="tb hide">Hide</button></div>
              <div class="list"><div class="lscroll"><svg class="tri" viewBox="0 0 6 5"><path d="M0 5h6L3 0z"/></svg><i></i><svg class="tri" viewBox="0 0 6 5"><path d="M0 0h6L3 5z"/></svg></div>
                <div class="crows">${chain("Massive", "sel")}${chain("Operator")}<div class="dropzone">Drop an Instrument or<br>Sample Here</div></div></div>
            </div>
          </div>
        </div>
        ${this.strip("Massive", "in cap")}
        <div class="strip in white">${round("power", "Toggle Audio Effect Rack", "on")}${round("swap", "Macros", "")}${round("list", "Chains", "")}${round("save", "Devices", "dark")}<span class="vt">Audio Effect ...</span>${round("swap", "Hot-swap")}${round("save", "Save", "dark")}</div>
        <div class="eq">
          <div class="title">${round("power", "Toggle EQ Eight", "on")}${round("right", "Unfold", "")}<span>EQ Eight</span><i class="spring"></i>${round("swap", "Hot-swap")}${round("save", "Save", "dark")}</div>
          <div class="ebody">
            <div class="eknobs"><span>Freq</span>${knob(0, "#9b9894")}<span>856 Hz</span><span>Gain</span>${knob(150, "#333")}<span>15.0 dB</span><span>Q</span>${knob(-45, "#333")}<span>0.71</span></div>
            <div class="emid">${this.eqScreen()}
              <div class="bands">${shapes.map((s, i) => html`<div class="band ${i === 2 ? "cur" : ""} ${i > 1 && i < 6 ? "act" : ""}">
                <span class="drop"><select aria-label="Filter type ${i + 1}"><option></option></select><svg class="shape" viewBox="0 0 14 7"><path d=${s} fill="none" stroke="#222" stroke-width=".9"/></svg><svg class="caret" viewBox="0 0 6 5"><path d="M0 0h6L3 5z"/></svg></span>
                <label><input type="checkbox" ?checked=${i > 1 && i < 6}>${i + 1}</label></div>`)}</div></div>
            <div class="eright"><div class="row"><button class="sq" aria-label="Audition"><svg width="7" height="7" viewBox="0 0 7 7"><path d="M1.500 6V3a2 2 0 0 1 4 0v3" fill="none" stroke="#222" stroke-width="1.200"/></svg></button><button class="sq lime" aria-label="Analyze"><svg width="9" height="7" viewBox="0 0 9 7"><path d="M1.500 3v3M3.500 1v5M5.500 3v3M7.500 2v4" stroke="#3b4d08"/></svg></button></div>
              <span class="l">Mode</span>${drop("Mode", "Stereo", "io")}<span class="l">Edit</span><span class="field gray">A</span>
              <span class="l">Adapt. Q</span><button class="field lime">On</button><span class="l">Scale</span><span class="field amber">100 %</span><span class="l">Gain</span><span class="field vol">0.00 dB</span></div>
          </div>
        </div>
        ${this.strip("Multiband Dynamics", "in")}
        <div class="end"></div>
      </div>
      <div class="gap hot"><i></i></div>
      ${["Multiband Dynamics", "Compressor", "Spectrum", "Simple Delay", "Ping Pong Delay"].map((n) => html`${this.strip(n, "cap", n === "Simple Delay")}<div class="gap hot"><i></i></div>`)}
      <div class="empty">Drop Audio Effects Here</div>
    </section>`;
  }

  render() {
    return html`${this.bar()}${this.arrangement()}${this.devices()}
      <footer class="status"><div class="tabicon">${round("right", "Info view", "big")}</div>
        <div class="msg">GROWLS | Instrument Rack | Massive</div><div class="mini"></div>
        <div class="tab">GROWLS<svg viewBox="0 0 76 10"><path d="M0 0h3v10H0z" fill="#e6cfd2"/><path d="M4 0h12v10H4zM18 0h16v10H18zM58 0h4v10h-4z" fill="#dfe0cf"/><path d="M5 3h6M6 6h9M20 3h4M26 5h6" stroke="#777"/><path d="M36 1h21v8H36z" fill="#2a2c28"/><path d="M64.500 0v9M67.500 0v9M70.500 0v9M73.500 0v9" stroke="#b5b0a8"/></svg></div>
        <div class="last">${round("up", "Hide devices", "big")}</div></footer>`;
  }
}
